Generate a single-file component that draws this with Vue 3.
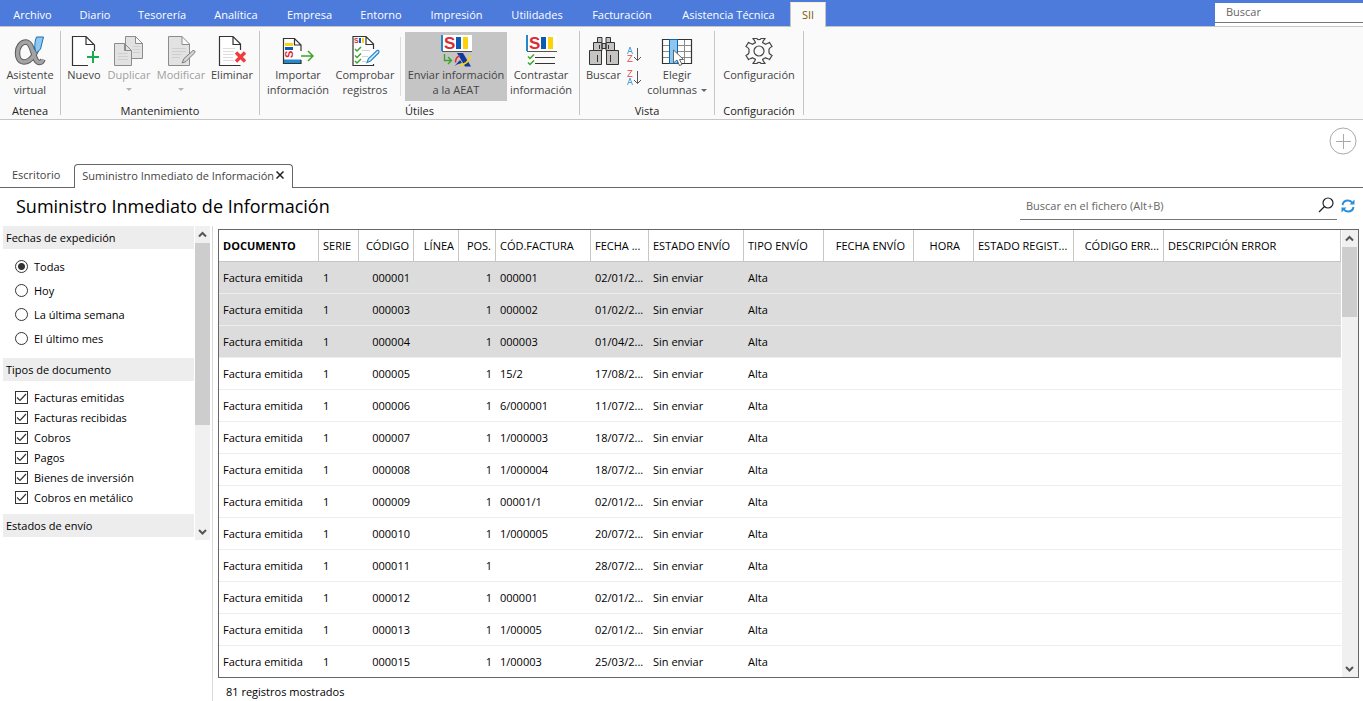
<script setup>
import { ref } from 'vue'

const menu = ['Archivo', 'Diario', 'Tesorería', 'Analítica', 'Empresa', 'Entorno', 'Impresión', 'Utilidades', 'Facturación', 'Asistencia Técnica', 'SII']

const period = ref('Todas')
const periods = ['Todas', 'Hoy', 'La última semana', 'El último mes']
const types = ['Facturas emitidas', 'Facturas recibidas', 'Cobros', 'Pagos', 'Bienes de inversión', 'Cobros en metálico']
const checkedTypes = ref([...types])

const columns = [
  { label: 'DOCUMENTO', cls: 'c-doc' },
  { label: 'SERIE', cls: 'c-serie' },
  { label: 'CÓDIGO', cls: 'c-cod num' },
  { label: 'LÍNEA', cls: 'c-linea num' },
  { label: 'POS.', cls: 'c-pos num' },
  { label: 'CÓD.FACTURA', cls: 'c-fact' },
  { label: 'FECHA ...', cls: 'c-fecha' },
  { label: 'ESTADO ENVÍO', cls: 'c-estado' },
  { label: 'TIPO ENVÍO', cls: 'c-tipo' },
  { label: 'FECHA ENVÍO', cls: 'c-fenvio num wide' },
  { label: 'HORA', cls: 'c-hora num wider' },
  { label: 'ESTADO REGIST...', cls: 'c-reg' },
  { label: 'CÓDIGO ERR...', cls: 'c-err num' },
  { label: 'DESCRIPCIÓN ERROR', cls: 'c-desc' }
]

const rows = [
  ['000001', '000001', '02/01/2...'],
  ['000003', '000002', '01/02/2...'],
  ['000004', '000003', '01/04/2...'],
  ['000005', '15/2', '17/08/2...'],
  ['000006', '6/000001', '11/07/2...'],
  ['000007', '1/000003', '18/07/2...'],
  ['000008', '1/000004', '18/07/2...'],
  ['000009', '00001/1', '02/01/2...'],
  ['000010', '1/000005', '20/07/2...'],
  ['000011', '', '28/07/2...'],
  ['000012', '000001', '02/01/2...'],
  ['000013', '1/00005', '02/01/2...'],
  ['000015', '1/00003', '25/03/2...']
].map((r, i) => ({
  selected: i < 3,
  cells: ['Factura emitida', '1', r[0], '', '1', r[1], r[2], 'Sin enviar', 'Alta', '', '', '', '', '']
}))
</script>

<template>
  <div class="app">
    <header class="menubar">
      <nav class="menu">
        <button v-for="m in menu" :key="m" type="button" :class="{ active: m === 'SII' }">{{ m }}</button>
      </nav>
      <input class="top-search" type="text" placeholder="Buscar" aria-label="Buscar">
    </header>

    <section class="ribbon">
      <div class="group g-atenea">
        <div class="tools">
          <button type="button" class="tool w-full">
            <svg class="ico" viewBox="0 0 32 32">
              <path d="M24.500 8C23 16 18 27 10 27C5 27 3.500 22 3.500 18C3.500 12 7 7 12 7C20 7.500 18.500 27.500 25.500 27.500C28 27.500 28.500 26 29 24.500" fill="none" stroke="#5c5c5c" stroke-width="5.500" />
              <path d="M24.500 8C23 16 18 27 10 27C5 27 3.500 22 3.500 18C3.500 12 7 7 12 7C20 7.500 18.500 27.500 25.500 27.500C28 27.500 28.500 26 29 24.500" fill="none" stroke="#a3a3a3" stroke-width="3.500" />
              <path d="M22.500 2H29.500L26.500 14L22.500 18C20 14 20.500 7 22.500 2Z" fill="#8cc8f2" stroke="#1e6fb0" />
            </svg>
            <span>Asistente<br>virtual</span>
          </button>
        </div>
        <div class="caption">Atenea</div>
      </div>

      <div class="group g-mant">
        <div class="tools">
          <button type="button" class="tool w-40">
            <svg class="ico" viewBox="0 0 32 32" fill="none">
              <path d="M20 30.500H4.500V1.500H18L25.500 9V17L20 20Z" fill="#fff" />
              <path d="M20 30.500H4.500V1.500H18L26.500 10V16M18 1.500V9.500H26" stroke="#333" stroke-width="1.200" />
              <path d="M25 16V28M19 22H31" stroke="#17ad4f" stroke-width="2" />
            </svg>
            <span>Nuevo</span>
          </button>
          <button type="button" class="tool w-50" disabled>
            <svg class="ico" viewBox="0 0 32 32" fill="#e2e2e2" stroke="#8c8c8c">
              <path d="M12.500 1.500H22.500L29.500 8.500V23.500H12.500ZM22.500 1.500V8.500H29.500" />
              <path d="M1.500 8.500H11.500L18.500 15.500V30.500H1.500ZM11.500 8.500V15.500H18.500" />
              <path d="M5 18.500H15M5 21.500H15M5 24.500H15M20 11.500H27M20 14.500H27M20 17.500H27" stroke="#cfcfcf" />
            </svg>
            <span>Duplicar</span><i class="caret"></i>
          </button>
          <button type="button" class="tool w-54" disabled>
            <svg class="ico" viewBox="0 0 32 32" fill="none" stroke="#8c8c8c">
              <path d="M3.500 30.500V1.500H17L24.500 9V30.500ZM17 1.500V9.500H24.500" fill="#e2e2e2" />
              <path d="M7 13.500H21M7 16.500H21M7 19.500H17M7 22.500H15" stroke="#cfcfcf" />
              <path d="M17 28L19 23.500L28 15.500C30 15 30.500 17 29.500 18L21 26.500Z" fill="#d4d4d4" stroke="#7c7c7c" />
            </svg>
            <span>Modificar</span><i class="caret"></i>
          </button>
          <button type="button" class="tool w-48">
            <svg class="ico" viewBox="0 0 32 32" fill="none">
              <path d="M3.500 30.500V1.500H17L24.500 9V30.500Z" fill="#fff" />
              <path d="M24.500 30.500H3.500V1.500H17L24.500 9V15M17 1.500V9.500H24.500" stroke="#333" stroke-width="1.200" />
              <path d="M7 13.500H19M7 16.500H18M7 19.500H17M7 22.500H17M7 25.500H18" stroke="#dedede" />
              <path d="M20 17.500L29 26.500M29 17.500L20 26.500" stroke="#f03c3c" stroke-width="3.400" />
            </svg>
            <span>Eliminar</span>
          </button>
        </div>
        <div class="caption">Mantenimiento</div>
      </div>

      <div class="group g-utiles">
        <div class="tools">
          <button type="button" class="tool w-68">
            <svg class="ico" viewBox="0 0 32 32" fill="none">
              <path d="M1.500 28.500V3.500H12.500L19 10V28.500Z" fill="#fff" />
              <path d="M2 24.500H19V28.500H2Z" fill="#2389cc" />
              <path d="M19 16V10L12.500 3.500H1.500V28.500H19V25M12.500 3.500V10H19" stroke="#333" stroke-width="1.200" />
              <path d="M3 8H11V11H3Z" fill="#fcd20a" /><path d="M3 12H11V15H3Z" fill="#0b5cb0" />
              <text transform="translate(11 23) rotate(-90)" font-size="11" class="s-mark">S</text>
              <path d="M19 21H31M26 16L31 21L26 26" stroke="#3da52c" stroke-width="1.500" />
            </svg>
            <span>Importar<br>información</span>
          </button>
          <button type="button" class="tool w-66">
            <svg class="ico" viewBox="0 0 32 32" fill="none">
              <path d="M4 30.500V1.500H17L24.500 9V30.500Z" fill="#fff" />
              <path d="M24.500 29V30.500H4V1.500H17L24.500 9V14M17 1.500V9.500H24.500" stroke="#333" stroke-width="1.200" />
              <text x="5" y="8" font-size="7" class="s-mark">S</text>
              <path d="M10 3H12V8H10Z" fill="#0b5cb0" /><path d="M13 3H15V8H13Z" fill="#fcd20a" />
              <path d="M13 15.500H21M13 21.500H19M13 26.500H17" stroke="#d4d4d4" />
              <path d="M6 14L8 16L12 12M6 20.500L8 22.500L12 18.500M6 26L8 28L12 24" stroke="#3da52c" stroke-width="1.500" />
              <path d="M18 27.500L19.500 23.500L28 15.500C30 15 30.500 16.500 29.500 18L21.500 26Z" fill="#d5ebfa" stroke="#2688ca" stroke-width="1.200" />
            </svg>
            <span>Comprobar<br>registros</span>
          </button>
          <i class="mini-sep"></i>
          <button type="button" class="tool w-102 pressed">
            <svg class="ico" viewBox="0 0 32 32" fill="none">
              <path d="M1 0H32V16H1Z" fill="#fff" /><path d="M1 0H3V16H1Z" fill="#2389cc" /><path d="M2 16.500H32" stroke="#555" />
              <text x="4" y="14" font-size="17" class="s-mark">S</text>
              <path d="M16 2H21V14H16Z" fill="#0b5cb0" /><path d="M23 2H28V14H23Z" fill="#fcd20a" />
              <path d="M4.500 19V25.500H11M8 22L11.500 25.500L8 29" stroke="#3da52c" stroke-width="1.400" />
              <path d="M17 18H23L31 31.500H25Z" fill="#11389b" />
              <path d="M15.500 27.500C15.500 24 17 21.500 20 21" stroke="#e02c2c" stroke-width="1.500" />
              <path d="M14.500 31L20 25L22 28C20 28.500 17 29 14.500 31Z" fill="#11389b" />
              <path d="M20 30C25 29.500 29 26 30.500 21" stroke="#fcd20a" stroke-width="1.800" />
            </svg>
            <span>Enviar información<br>a la AEAT</span>
          </button>
          <button type="button" class="tool w-68">
            <svg class="ico" viewBox="0 0 32 32" fill="none">
              <path d="M1 0H32V16H1Z" fill="#fff" /><path d="M1 0H3V16H1Z" fill="#2389cc" /><path d="M2 16.500H32" stroke="#555" />
              <text x="4" y="14" font-size="17" class="s-mark">S</text>
              <path d="M16 2H21V14H16Z" fill="#0b5cb0" /><path d="M23 2H28V14H23Z" fill="#fcd20a" />
              <path d="M3 21.500L5 23.500L9 19.500M3 27.500L5 29.500L9 25.500" stroke="#3da52c" stroke-width="1.500" />
              <path d="M10 22.500H30M10 28.500H30" stroke="#333" stroke-width="1.200" />
            </svg>
            <span>Contrastar<br>información</span>
          </button>
        </div>
        <div class="caption">Útiles</div>
      </div>

      <div class="group g-vista">
        <div class="tools">
          <button type="button" class="tool w-38">
            <svg class="ico" viewBox="0 0 32 32" fill="#c6c4c2" stroke="#333">
              <path d="M1.500 15.500H13.500V29.500H1.500ZM18.500 15.500H30.500V29.500H18.500ZM5.500 7.500H14V15.500H5.500ZM18 7.500H26.500V15.500H18ZM9.500 2.500H14V7.500H9.500ZM18 2.500H22.500V7.500H18ZM14 8.500H18V13.500H14Z" />
              <path d="M9.500 20V27M22.500 20V27M11.500 10V14M20.500 10V14" fill="none" />
            </svg>
            <span>Buscar</span>
          </button>
          <div class="sorts">
            <button type="button" aria-label="Orden ascendente">
              <svg viewBox="0 0 18 18"><path d="M3.500 8L6 1L8.500 8M4.500 5.500H7.500" fill="none" stroke="#4fa3dc" /><path d="M3.500 9.500H8L3.500 15.500H8.500" fill="none" stroke="#ec6060" /><path d="M13.500 2V14.500M10 11L13.500 14.500L17 11" fill="none" stroke="#555" /></svg>
            </button>
            <button type="button" aria-label="Orden descendente">
              <svg viewBox="0 0 18 18"><path d="M3.500 1.500H8L3.500 7.500H8.500" fill="none" stroke="#ec6060" /><path d="M3.500 16L6 9L8.500 16M4.500 13.500H7.500" fill="none" stroke="#4fa3dc" /><path d="M13.500 2V14.500M10 11L13.500 14.500L17 11" fill="none" stroke="#555" /></svg>
            </button>
          </div>
          <button type="button" class="tool w-65">
            <svg class="ico" viewBox="0 0 32 32" fill="none">
              <path d="M1.500 4.500H30.500V28.500H1.500Z" fill="#fff" />
              <path d="M2 10.500H30M2 16.500H30M2 22.500H30M23.500 5V28" stroke="#8a8a8a" />
              <path d="M1.500 4.500H30.500V28.500H1.500Z" stroke="#333" stroke-width="1.200" />
              <path d="M8.500 4.500H16.500V28.500H8.500Z" fill="#8fc6ef" stroke="#0a68b0" />
              <path d="M12.500 15V28L16 25L18.500 30.500L21 29.500L18.500 24.500H22.500Z" fill="#fff" stroke="#666" />
            </svg>
            <span>Elegir<br>columnas <b class="caret inline"></b></span>
          </button>
        </div>
        <div class="caption">Vista</div>
      </div>

      <div class="group g-conf">
        <div class="tools">
          <button type="button" class="tool w-full">
            <svg class="ico" viewBox="0 0 32 32" fill="none" stroke="#444" stroke-width="1.200">
              <path d="M12.400 7.600C12 5.500 10.500 4.800 10 3.500H14C14 5 18 5 18 3.500H22C21.500 4.800 20 5.500 19.600 7.600L22.600 9.300C24.500 8 25.500 8.500 26.500 7.500L29 11.500C27.500 12.200 26.500 13 26 14.300V17.700C26.500 19 27.500 19.800 29 20.500L26.500 24.500C25.500 23.500 24.500 24 22.600 22.700L19.600 24.400C20 26.500 21.500 27.200 22 28.500H18C18 27 14 27 14 28.500H10C10.500 27.200 12 26.500 12.400 24.400L9.400 22.700C7.500 24 6.500 23.500 5.500 24.500L3 20.500C4.500 19.800 5.500 19 6 17.700V14.300C5.500 13 4.500 12.200 3 11.500L5.500 7.500C6.500 8.500 7.500 8 9.400 9.300Z" />
              <circle cx="16" cy="16" r="5" />
            </svg>
            <span>Configuración</span>
          </button>
        </div>
        <div class="caption">Configuración</div>
      </div>
    </section>

    <div class="add-row">
      <button type="button" class="add" aria-label="Añadir">
        <svg viewBox="0 0 28 28" fill="none" stroke="#aaa"><circle cx="14" cy="14" r="13" /><path d="M14.500 7V22M7 14.500H22" /></svg>
      </button>
    </div>

    <nav class="tabs">
      <button type="button" class="tab">Escritorio</button>
      <button type="button" class="tab current">Suministro Inmediato de Información
        <svg viewBox="0 0 8 8" fill="none" stroke="#222" stroke-width="1.500"><path d="M0.500 0.500L7.500 7.500M7.500 0.500L0.500 7.500" /></svg>
      </button>
    </nav>

    <div class="titlebar">
      <h1>Suministro Inmediato de Información</h1>
      <div class="file-search">
        <input type="text" placeholder="Buscar en el fichero (Alt+B)" aria-label="Buscar en el fichero">
        <svg viewBox="0 0 16 16" fill="none" stroke="#222" stroke-width="1.200"><circle cx="10" cy="6" r="5" /><path d="M6.500 9.500L1 15" /></svg>
      </div>
      <button type="button" class="refresh" aria-label="Actualizar">
        <svg viewBox="0 0 14 14" fill="none" stroke="#2c8fd6" stroke-width="2"><path d="M1.500 6C2 3 4.500 1.500 7 1.500C9 1.500 10.500 2.500 11.500 4M12.500 8C12 11 9.500 12.500 7 12.500C5 12.500 3.500 11.500 2.500 10" /><path d="M13.500 0.500V5.500H8.500ZM0.500 13.500V8.500H5.500Z" fill="#2c8fd6" stroke="none" /></svg>
      </button>
    </div>

    <main class="work">
      <aside class="side">
        <div class="filters">
          <fieldset>
            <legend>Fechas de expedición</legend>
            <div class="opts radios">
              <label v-for="p in periods" :key="p"><input v-model="period" type="radio" name="period" :value="p">{{ p }}</label>
            </div>
          </fieldset>
          <fieldset>
            <legend>Tipos de documento</legend>
            <div class="opts checks">
              <label v-for="t in types" :key="t">
                <span class="box"><input v-model="checkedTypes" type="checkbox" :value="t"><svg viewBox="0 0 13 13" fill="none" stroke="#333" stroke-width="1.200"><path d="M2 6.500L5 9.500L11 3" /></svg></span>{{ t }}
              </label>
            </div>
          </fieldset>
          <fieldset><legend>Estados de envío</legend></fieldset>
        </div>
        <div class="scroll">
          <svg viewBox="0 0 15 17" class="arrow"><path d="M4 10.500L7.500 7L11 10.500" /></svg>
          <div class="track"><div class="thumb side-thumb"></div></div>
          <svg viewBox="0 0 15 17" class="arrow"><path d="M4 7L7.500 10.500L11 7" /></svg>
        </div>
      </aside>

      <section class="content">
        <div class="grid-box">
          <div class="grid-view">
            <table>
              <thead>
                <tr><th v-for="c in columns" :key="c.label" :class="c.cls" scope="col">{{ c.label }}</th></tr>
              </thead>
              <tbody>
                <tr v-for="r in rows" :key="r.cells[2]" :class="{ selected: r.selected }">
                  <td v-for="(v, i) in r.cells" :key="i" :class="columns[i].cls">{{ v }}</td>
                </tr>
              </tbody>
            </table>
          </div>
          <div class="scroll">
            <svg viewBox="0 0 15 17" class="arrow"><path d="M4 10.500L7.500 7L11 10.500" /></svg>
            <div class="track"><div class="thumb grid-thumb"></div></div>
            <svg viewBox="0 0 15 17" class="arrow"><path d="M4 7L7.500 10.500L11 7" /></svg>
          </div>
        </div>
        <footer class="status">81 registros mostrados</footer>
      </section>
    </main>
  </div>
</template>

<style>
body { margin: 0; background: #fff; }
</style>

<style scoped>
* { box-sizing: border-box; }
.app { height: 100vh; display: flex; flex-direction: column; overflow: hidden; font-family: "Open Sans", "Noto Sans", sans-serif; font-size: 11px; color: #000; background: #fff; }
button { font: inherit; color: inherit; background: none; border: 0; padding: 0; margin: 0; }
input { font: inherit; color: #000; }
svg { display: block; flex: none; }

.menubar { display: flex; justify-content: space-between; height: 27px; flex: none; background: #4d7bdb; border-bottom: 1px solid #c6c6c6; }
.menu { display: grid; grid-template-columns: 65px 60px 74px 74px 73px 70px 81px 80px 90px 123px 36px; padding-top: 2px; height: 27px; }
.menu button { color: #fff; white-space: nowrap; }
.menu .active { background: #fafafa; color: #7a5c00; border: 1px solid #c6c6c6; border-top-color: #fff2c8; border-bottom: 0; padding-bottom: 1px; }
.top-search { width: 148px; height: 20px; margin-top: 3px; border: 0; border-bottom: 1px solid #777; background: #fff; padding: 0 11px 2px; box-shadow: 0 3px #fff; outline: 0; }
input::placeholder { color: #666; opacity: 1; }

.ribbon { display: flex; flex: none; height: 93px; background: #fafafa; border-bottom: 1px solid #c6c6c6; padding: 4px 0; color: #444; }
.group { display: flex; flex-direction: column; border-right: 1px solid #c6c6c6; }
.tools { display: flex; justify-content: center; height: 72px; padding-top: 1px; }
.g-atenea { width: 61px; }
.g-mant { width: 199px; }
.g-utiles { width: 320px; }
.g-vista { width: 135px; }
.g-conf { width: 89px; }
.tool { display: flex; flex-direction: column; align-items: center; height: 69px; padding-top: 3px; line-height: 15px; text-align: center; white-space: nowrap; flex: none; }
.tool:disabled { color: #a0a0a0; }
.pressed { background: #c5c5c5; }
.w-full { width: 100%; }
.w-38 { width: 38px; }
.w-40 { width: 40px; }
.w-48 { width: 48px; }
.w-50 { width: 50px; }
.w-54 { width: 54px; }
.w-65 { width: 65px; }
.w-66 { width: 66px; }
.w-68 { width: 68px; }
.w-102 { width: 102px; }
.ico { width: 32px; height: 32px; }
.s-mark { font-family: "Liberation Sans", sans-serif; font-weight: bold; fill: #dc2a35; }
.mini-sep { width: 1px; height: 59px; margin: 5px 4px 0 2px; background: #dcdcdc; }
.caret { border: 3px solid transparent; border-top-color: #b5b5b5; border-bottom: 0; margin-top: 6px; }
.caret.inline { display: inline-block; border-top-color: #666; margin: 0 0 2px 1px; }
.sorts { display: flex; flex-direction: column; gap: 5px; width: 22px; padding: 14px 0 0 1px; }
.sorts svg { width: 18px; height: 18px; }
.caption { padding-top: 2px; text-align: center; line-height: 15px; color: #222; }

.add-row { display: flex; justify-content: flex-end; flex: none; height: 44px; padding: 7px 6px 0 0; }
.add { width: 28px; height: 28px; }
.tabs { display: flex; align-items: flex-end; flex: none; height: 24px; color: #444; box-shadow: inset 0 -1px #666; }
.tab { height: 24px; padding: 0 14px 3px 12px; }
.tab.current { display: flex; align-items: center; gap: 2px; padding: 0 8px 3px 7px; background: #fff; border: 1px solid #666; border-bottom: 0; border-radius: 4px 4px 0 0; }
.tab svg { width: 8px; height: 8px; }

.titlebar { display: flex; align-items: center; flex: none; height: 38px; padding: 0 8px 3px 16px; }
h1 { flex: 1; margin: 0; font-size: 18px; line-height: 26px; font-weight: normal; }
.file-search { display: flex; align-items: center; width: 317px; height: 29px; padding: 0 3px 0 6px; border-bottom: 1px solid #777; }
.file-search input { flex: 1; min-width: 0; border: 0; outline: 0; padding: 0; background: none; }
.file-search svg { width: 16px; height: 16px; }
.refresh { margin-left: 4px; }
.refresh svg { width: 14px; height: 14px; }

.work { display: flex; flex: 1; min-height: 0; }
.side { display: flex; align-items: flex-start; width: 213px; flex: none; padding-left: 3px; border-right: 1px solid #d9d9d9; }
.filters { width: 191px; margin-right: 1px; }
fieldset { border: 0; margin: 0; padding: 0; min-width: 0; }
legend { width: 100%; height: 23px; padding: 0 3px; line-height: 23px; background: #ededed; }
.opts { display: flex; flex-direction: column; padding-left: 12px; }
.opts label { display: flex; align-items: center; gap: 6px; }
.radios { padding-top: 5px; padding-bottom: 8px; }
.radios label { height: 24px; }
.checks { padding-top: 6px; padding-bottom: 7px; }
.checks label { height: 20px; }
.opts input { appearance: none; margin: 0; width: 13px; height: 13px; border: 1px solid #333; background: #fff; flex: none; }
.opts input[type="radio"] { border-radius: 50%; }
.opts input[type="radio"]:checked { background: radial-gradient(circle, #333 0 3px, #fff 4px); }
.box { display: grid; flex: none; }
.box > * { grid-area: 1 / 1; }
.box svg { width: 13px; height: 13px; visibility: hidden; pointer-events: none; }
.box input:checked + svg { visibility: visible; }

.scroll { display: flex; flex-direction: column; width: 15px; flex: none; background: #f0f0f0; }
.side .scroll { height: 314px; }
.grid-box .scroll { width: 16px; }
.arrow { width: 15px; height: 17px; fill: none; stroke: #555; stroke-width: 2; }
.track { flex: 1; }
.thumb { width: 15px; background: #cdcdcd; }
.side-thumb { height: 65%; }
.grid-thumb { height: 17%; }

.content { display: flex; flex-direction: column; flex: 1; min-width: 0; padding: 3px 4px 0 5px; }
.grid-box { display: flex; flex: 1; min-height: 0; border: 1px solid #666; }
.grid-view { flex: 1; min-width: 0; overflow: hidden; padding-right: 1px; }
table { width: 100%; border-collapse: separate; border-spacing: 0; table-layout: fixed; }
th, td { height: 32px; padding: 0 4px; text-align: left; white-space: nowrap; overflow: hidden; border-bottom: 1px solid #ededed; }
th { font-weight: normal; border-right: 1px solid #c6c6c6; border-bottom-color: #c6c6c6; }
th:first-child { font-weight: bold; }
.num { text-align: right; }
th.wide, th.wider { padding-right: 8px; }
th.wider { padding-right: 13px; }
.selected td { background: #dcdcdc; }
.c-doc { width: 100px; }
.c-serie { width: 40px; }
.c-cod { width: 55px; }
.c-linea { width: 45px; }
.c-pos { width: 37px; }
.c-fact { width: 95px; }
.c-fecha { width: 58px; }
.c-estado { width: 95px; }
.c-tipo { width: 80px; }
.c-fenvio { width: 90px; }
.c-hora { width: 60px; }
.c-reg { width: 100px; }
.c-err { width: 90px; }
.status { flex: none; height: 23px; padding: 0 8px; line-height: 28px; }
</style>
